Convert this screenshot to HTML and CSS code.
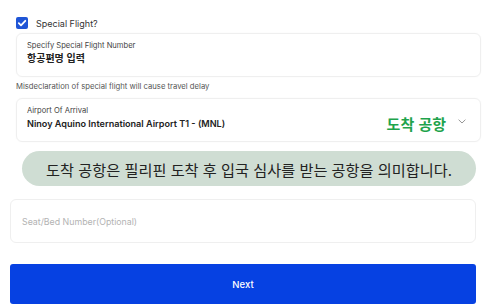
FILE: index.html
```html
<!DOCTYPE html>
<html lang="ko">
<head>
<meta charset="utf-8">
<link rel="stylesheet" href="styles.css">
</head>
<body>
<div class="page">
  <div class="top">
    <label class="check-row">
      <span class="checkbox">
        <svg viewBox="0 0 12 12" width="12" height="12"><path d="M2.8 6.2 L5 8.3 L9.3 3.8" fill="none" stroke="#fff" stroke-width="1.8" stroke-linecap="round" stroke-linejoin="round"/></svg>
      </span>
      <span class="check-label">Special Flight?</span>
    </label>
    <div class="card">
      <div class="label">Specify Special Flight Number</div>
      <div class="value ko">항공편명 입력</div>
    </div>
    <div class="hint">Misdeclaration of special flight will cause travel delay</div>
    <div class="card">
      <div class="label">Airport Of Arrival</div>
      <div class="row">
        <div class="value">Ninoy Aquino International Airport T1 - (MNL)</div>
        <span class="tag ko">도착 공항</span>
        <svg class="chev" viewBox="0 0 8 5" width="8" height="5"><path d="M0.6 0.7 L4 4 L7.4 0.7" fill="none" stroke="#8a8a8a" stroke-width="0.9"/></svg>
      </div>
    </div>
  </div>
  <div class="bubble ko">도착 공항은 필리핀 도착 후 입국 심사를 받는 공항을 의미합니다.</div>
  <div class="seat">Seat/Bed Number(Optional)</div>
  <button class="next">Next</button>
</div>
</body>
</html>
```
FILE: styles.css
```css
html, body {
  margin: 0;
  padding: 0;
  background: #fff;
}
body {
  font-family: Inter, "Noto Sans CJK KR", sans-serif;
  color: #222;
}
.ko {
  font-family: "Noto Sans CJK KR", sans-serif;
}
.page {
  width: 482px;
  padding-top: 17px;
}
.top {
  margin-left: 16px;
  margin-right: 1px;
}
.check-row {
  display: flex;
  align-items: center;
  height: 12px;
  gap: 8px;
}
.checkbox {
  width: 12px;
  height: 12px;
  border-radius: 2px;
  background: #1f55d6;
  display: flex;
}
.check-label {
  font-size: 9px;
  color: #333;
}
.card {
  margin-top: 4px;
  height: 44px;
  box-sizing: border-box;
  border: 1px solid #efefef;
  border-radius: 6px;
  padding: 7px 14px 0 10px;
  box-shadow: 0 0 2px rgba(0,0,0,0.03);
}
.label {
  font-size: 7.6px;
  line-height: 10px;
  color: #444;
}
.value {
  font-size: 9.1px;
  line-height: 14px;
  font-weight: 600;
  color: #222;
}
.value.ko {
  font-size: 10px;
  font-weight: 700;
}
.row {
  display: flex;
  align-items: center;
}
.tag {
  margin-left: auto;
  font-size: 15px;
  font-weight: 700;
  color: #1ea34c;
  line-height: 14px;
  margin-top: 1px;
}
.chev {
  margin-left: 12px;
  margin-top: -5px;
}
.hint {
  font-size: 7.7px;
  line-height: 10px;
  color: #555;
  margin-top: 5px;
  margin-bottom: 2px;
}
.top .card + .hint + .card {
  margin-top: 6px;
}
.bubble {
  margin: 9px 6px 0 22px;
  height: 35px;
  border-radius: 18px;
  background: #cfddd3;
  display: flex;
  align-items: center;
  justify-content: center;
  font-size: 15.2px;
  color: #222;
}
.seat {
  margin: 13px 6px 0 10px;
  height: 44px;
  box-sizing: border-box;
  border: 1px solid #efefef;
  border-radius: 6px;
  padding-left: 11px;
  display: flex;
  align-items: center;
  font-size: 8.8px;
  color: #b3b3b3;
}
.next {
  display: block;
  margin: 21px 6px 0 10px;
  width: 466px;
  height: 40px;
  border: none;
  border-radius: 3px;
  background: #0641e2;
  color: #fff;
  font-family: Inter, sans-serif;
  font-size: 9.5px;
  font-weight: 500;
}
```
